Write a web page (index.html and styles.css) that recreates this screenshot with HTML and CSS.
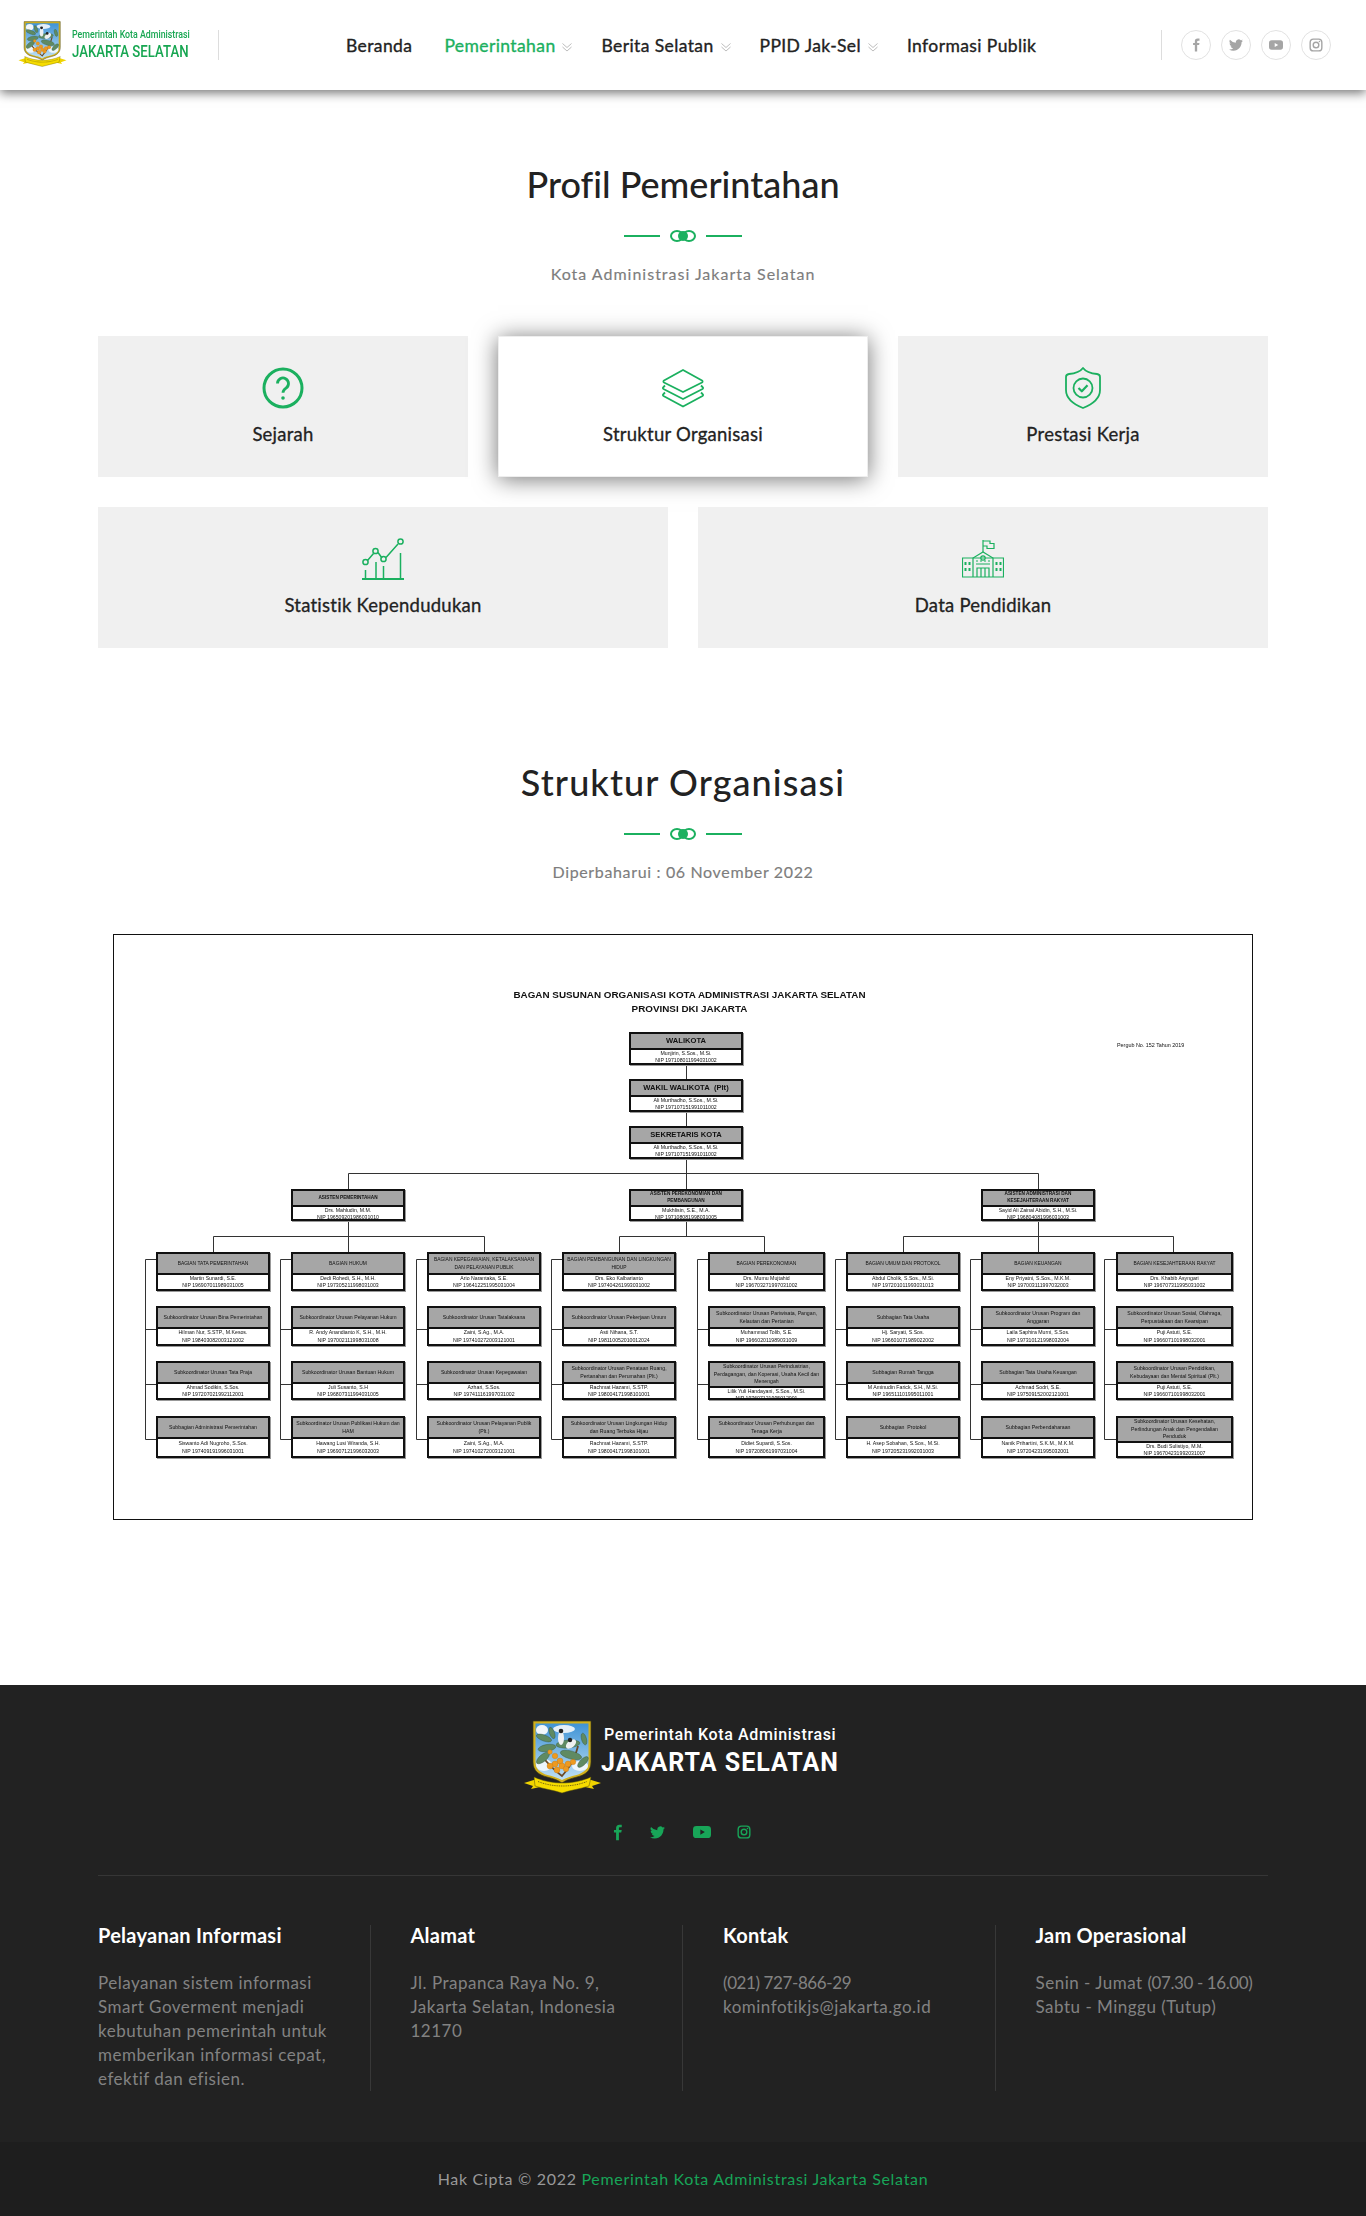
FILE: index.html
```html
<!DOCTYPE html>
<html lang="id">
  <head>
    <meta charset="UTF-8" />
    <meta name="viewport" content="width=device-width, initial-scale=1.0" />
    <title>Profil Pemerintahan - Kota Administrasi Jakarta Selatan</title>
    <link rel="stylesheet" href="styles.css">
  </head>
  <body>
    <!-- Shared icons -->
    <svg class="icon-defs" aria-hidden="true">
      <defs>
        <linearGradient id="sky" x1="0" y1="0" x2="0" y2="1">
          <stop offset="0" stop-color="#3f93d6" />
          <stop offset="1" stop-color="#bfe0f4" />
        </linearGradient>
      </defs>
      <symbol id="crest" viewBox="0 0 77 77">
        <path d="M9 1h58v41c0 9-6 13-14 15-6 1.500-11 3-15 6-4-3-9-4.500-15-6-8-2-14-6-14-15z" fill="#d2b01c" stroke="#3a3a14" stroke-width=".7" />
        <path d="M11.500 3.500h53V42c0 7-5 11-12 13-6 1.500-10 2.500-14.500 5-4.500-2.500-8.500-3.500-14.500-5-7-2-12-6-12-13z" fill="url(#sky)" />
        <ellipse cx="18" cy="10" rx="6" ry="5" fill="#f2f6fa" />
        <ellipse cx="40" cy="9" rx="11" ry="4" fill="#e4eff8" />
        <ellipse cx="20" cy="45" rx="8" ry="6" fill="#eef6fb" />
        <ellipse cx="56" cy="46" rx="8" ry="5" fill="#eef6fb" />
        <path d="M18 36c6 8 12 14 20 20 6-7 12-14 16-30" fill="none" stroke="#6b4a26" stroke-width="1.800" />
        <g fill="#5f8a62" stroke="#34543a" stroke-width=".4">
          <ellipse cx="20" cy="18" rx="8" ry="3" transform="rotate(20 20 18)" />
          <ellipse cx="28" cy="13" rx="6" ry="2.500" transform="rotate(70 28 13)" />
          <ellipse cx="23" cy="28" rx="9" ry="3.500" transform="rotate(-10 23 28)" />
          <ellipse cx="19" cy="38" rx="8" ry="3.500" transform="rotate(-40 19 38)" />
          <ellipse cx="44" cy="24" rx="12" ry="4" transform="rotate(-5 44 24)" />
          <ellipse cx="47" cy="35" rx="11" ry="4" transform="rotate(15 47 35)" />
          <ellipse cx="60" cy="19" rx="6" ry="2.500" transform="rotate(75 60 19)" />
          <ellipse cx="59" cy="42" rx="7" ry="3" transform="rotate(-45 59 42)" />
        </g>
        <ellipse cx="37" cy="18" rx="3" ry="7" fill="#eef0f0" />
        <circle cx="37" cy="11" r="2.300" fill="#222" />
        <ellipse cx="47" cy="24" rx="6" ry="3.500" fill="#eef0f0" transform="rotate(-40 47 24)" />
        <circle cx="46" cy="20" r="2.200" fill="#222" />
        <g fill="#ee9a1f" stroke="#b96d10" stroke-width=".3">
          <circle cx="31" cy="36" r="2.800" />
          <circle cx="36" cy="41" r="3" />
          <circle cx="31" cy="44" r="3" />
          <circle cx="26" cy="46" r="3" />
          <circle cx="38" cy="46" r="3" />
          <circle cx="44" cy="44" r="3" />
          <circle cx="49" cy="42" r="2.800" />
          <circle cx="33" cy="50" r="3" />
          <circle cx="42" cy="49" r="2.800" />
          <circle cx="26" cy="32" r="2.300" />
        </g>
        <path d="M0 63l13-4 3 8-9 2 2-3z" fill="#f0d400" />
        <path d="M77 63l-13-4-3 8 9 2-2-3z" fill="#f0d400" />
        <path d="M10 57c18 8 39 8 57 0l-2 9c-9 3-18 4-27 7-9-3-18-4-27-7z" fill="#f6dc00" stroke="#54500c" stroke-width=".5" />
        <path d="M14 61.500c15 6 34 6 49 0" fill="none" stroke="#6e5e10" stroke-width="1" stroke-dasharray="1 .8" />
      </symbol>
      <symbol id="ic-facebook" viewBox="0 0 24 24">
        <path fill="currentColor" d="M14 8.500V6c0-1 .5-1.500 1.600-1.500H18V1h-3.200C11.500 1 10 3 10 5.600v2.900H7V12h3v11h4V12h3.300l.7-3.500z" />
      </symbol>
      <symbol id="ic-twitter" viewBox="0 0 24 24">
        <path fill="currentColor" d="M23.950 4.570a10 10 0 0 1-2.820.77 4.960 4.960 0 0 0 2.160-2.720 9.900 9.900 0 0 1-3.120 1.180 4.920 4.920 0 0 0-8.380 4.480A13.980 13.980 0 0 1 1.640 3.160a4.920 4.920 0 0 0 1.520 6.570 4.900 4.900 0 0 1-2.230-.61v.06a4.920 4.920 0 0 0 3.950 4.830 4.900 4.900 0 0 1-2.210.08 4.930 4.930 0 0 0 4.600 3.420A9.870 9.870 0 0 1 0 19.540a13.940 13.940 0 0 0 7.550 2.210c9.060 0 14-7.500 14-13.980 0-.21 0-.42-.02-.63a9.940 9.940 0 0 0 2.460-2.570z" />
      </symbol>
      <symbol id="ic-youtube" viewBox="0 0 24 24">
        <path fill="currentColor" fill-rule="evenodd" d="M4.500 4h15A4.500 4.500 0 0 1 24 8.500v7a4.500 4.500 0 0 1-4.500 4.500h-15A4.500 4.500 0 0 1 0 15.500v-7A4.500 4.500 0 0 1 4.500 4zM9.800 8.500v7l6-3.500z" />
      </symbol>
      <symbol id="ic-instagram" viewBox="0 0 24 24">
        <g fill="none" stroke="currentColor" stroke-width="2.400">
          <rect x="2" y="2" width="20" height="20" rx="5.500" />
          <circle cx="12" cy="12" r="4.800" />
        </g>
        <circle cx="18" cy="6" r="1.400" fill="currentColor" />
      </symbol>
      <symbol id="ic-chevrons" viewBox="0 0 10 9">
        <path d="M.5.500l4.500 4 4.500-4M.5 4l4.500 4 4.500-4" fill="none" stroke="currentColor" stroke-width=".9" />
      </symbol>
    </svg>

    <!-- Header -->
    <header class="site-header">
      <a class="header-logo" href="#">
        <svg class="header-crest"><use href="#crest" /></svg>
        <span class="header-logo-text">
          <span class="logo-small">Pemerintah Kota Administrasi</span>
          <span class="logo-big">JAKARTA SELATAN</span>
        </span>
      </a>
      <nav class="main-nav">
        <a href="#" class="nav-first">Beranda</a>
        <a href="#" class="active">Pemerintahan <svg class="nav-chevron"><use href="#ic-chevrons" /></svg></a>
        <a href="#">Berita Selatan <svg class="nav-chevron"><use href="#ic-chevrons" /></svg></a>
        <a href="#">PPID Jak-Sel <svg class="nav-chevron"><use href="#ic-chevrons" /></svg></a>
        <a href="#">Informasi Publik</a>
      </nav>
      <div class="header-social">
        <a href="#"><svg><use href="#ic-facebook" /></svg></a>
        <a href="#"><svg><use href="#ic-twitter" /></svg></a>
        <a href="#"><svg><use href="#ic-youtube" /></svg></a>
        <a href="#"><svg><use href="#ic-instagram" /></svg></a>
      </div>
    </header>

    <main class="container">
      <!-- Profil Pemerintahan -->
      <section class="profil">
        <div class="section-title">
          <h2>Profil Pemerintahan</h2>
          <div class="title-divider"><span class="rings"><i></i><i></i><b></b></span></div>
          <p>Kota Administrasi Jakarta Selatan</p>
        </div>

        <div class="card-row card-row-3">
          <a class="card" href="#">
            <svg class="card-icon" viewBox="0 0 42 42" fill="none" stroke="#1bb05f" stroke-width="3">
              <circle cx="21" cy="21" r="19" />
              <path d="M15.500 16.500a5.500 5.500 0 1 1 8.500 4.600c-2 1.300-3 2.400-3 4.600" stroke-width="2.800" />
              <circle cx="21" cy="31" r="1.800" fill="#1bb05f" stroke="none" />
            </svg>
            <span>Sejarah</span>
          </a>
          <a class="card active" href="#">
            <svg class="card-icon" viewBox="0 0 42 42" fill="none" stroke="#1bb05f" stroke-width="1.800" stroke-linejoin="round">
              <path d="M21 3l19 10.500c.8.500.8 1.500 0 2L21 25 2 15.500c-.8-.5-.8-1.500 0-2z" />
              <path d="M3 18.500L1.500 20c-.8.500-.8 1.500 0 2L21 32l19.500-10c.8-.5.8-1.500 0-2L39 18.500" />
              <path d="M3 25.500L1.500 27c-.8.500-.8 1.500 0 2L21 39.500 40.500 29c.8-.5.8-1.500 0-2L39 25.500" />
            </svg>
            <span>Struktur Organisasi</span>
          </a>
          <a class="card" href="#">
            <svg class="card-icon" viewBox="0 0 42 42" fill="none" stroke="#1bb05f" stroke-width="1.800" stroke-linejoin="round">
              <path d="M21 1c3 4 8 5.500 14 6 2 .2 3 1 3 3v13c0 8-7 14-17 18C11 37 4 31 4 23V10c0-2 1-2.800 3-3 6-.5 11-2 14-6z" />
              <circle cx="21" cy="21" r="9.500" />
              <path d="M16.500 21l3.300 3.300 5.700-6" stroke-width="2.200" />
            </svg>
            <span>Prestasi Kerja</span>
          </a>
        </div>

        <div class="card-row card-row-2">
          <a class="card" href="#">
            <svg class="card-icon" viewBox="0 0 42 42" fill="none" stroke="#1bb05f" stroke-width="1.500">
              <path d="M0 41h42" stroke-width="1.800" />
              <path d="M3.500 32v9M14 24v17M21.500 28v13M38.500 15v26" />
              <path d="M5.500 22.500L11.500 15.500M16 14.500L20 20M24 19.500L36 6" />
              <circle cx="3.500" cy="24" r="2.600" />
              <circle cx="13.500" cy="13" r="2.600" />
              <circle cx="21.500" cy="21" r="2.600" />
              <circle cx="38.500" cy="3.500" r="2.600" />
            </svg>
            <span>Statistik Kependudukan</span>
          </a>
          <a class="card" href="#">
            <svg class="card-icon card-icon-school" viewBox="0 0 42 38" fill="none" stroke="#1bb05f" stroke-width="1.200">
              <path d="M21 12V0M21 1h7v2.500h4v5h-7V6h-4" />
              <path d="M11 37V18l10-6 10 6v19" />
              <path d="M.5 18H11M31 18h10.500v19H.5V18z" />
              <circle cx="21" cy="18" r="2.200" />
              <path d="M15 37V28h12v9M19 28v9M23 28v9M14 24h14" />
              <path d="M14 21h14" stroke-dasharray="2 2" />
              <path d="M3.500 22v3M7.500 22v3M3.500 28v3M7.500 28v3M34.500 22v3M38.500 22v3M34.500 28v3M38.500 28v3" stroke-width="2" />
            </svg>
            <span>Data Pendidikan</span>
          </a>
        </div>
      </section>

      <!-- Struktur Organisasi -->
      <section class="struktur">
        <div class="section-title">
          <h2>Struktur Organisasi</h2>
          <div class="title-divider"><span class="rings"><i></i><i></i><b></b></span></div>
          <p>Diperbaharui : 06 November 2022</p>
        </div>

        <div class="org-frame">
          <div class="org-chart">
            <svg class="org-lines" viewBox="0 0 1138 584" fill="none" stroke="#333" stroke-width="1">
              <path d="M572.500 130v124M234.500 254v-15.500h690V254M234.500 286v31M572.500 286v15M924.500 286v31" />
              <path d="M99.500 317v-15.500h271V317M505.500 317v-15.500h145V317M789.500 317v-15.500h270V317" />
              <path d="M42 324.500H31.500v180H42M31.500 394.500H42M31.500 449.500H42" />
              <path d="M177 324.500H166.500v180H177M166.500 394.500H177M166.500 449.500H177" />
              <path d="M313 324.500H302.500v180H313M302.500 394.500H313M302.500 449.500H313" />
              <path d="M448 324.500H437.500v180H448M437.500 394.500H448M437.500 449.500H448" />
              <path d="M594 324.500H583.500v180H594M583.500 394.500H594M583.500 449.500H594" />
              <path d="M732 324.500H721.500v180H732M721.500 394.500H732M721.500 449.500H732" />
              <path d="M867 324.500H856.500v180H867M856.500 394.500H867M856.500 449.500H867" />
              <path d="M1002 324.500H990.500v180H1002M990.500 394.500H1002M990.500 449.500H1002" />
            </svg>

            <p class="org-note">Pergub No. 152 Tahun 2019</p>
            <h3 class="org-title">BAGAN SUSUNAN ORGANISASI KOTA ADMINISTRASI JAKARTA SELATAN<br />PROVINSI DKI JAKARTA</h3>

            <div class="org-spine">
              <div class="org-box"><div class="org-head">WALIKOTA</div><div class="org-body">Munjirin, S.Sos., M.Si.<br />NIP 197108011994031002</div></div>
              <div class="org-box"><div class="org-head">WAKIL WALIKOTA&nbsp; (Plt)</div><div class="org-body">Ali Murthadho, S.Sos., M.Si.<br />NIP 197107151991011002</div></div>
              <div class="org-box"><div class="org-head">SEKRETARIS KOTA</div><div class="org-body">Ali Murthadho, S.Sos., M.Si.<br />NIP 197107151991011002</div></div>
            </div>

            <div class="org-assistants">
              <div class="org-box"><div class="org-head">ASISTEN PEMERINTAHAN</div><div class="org-body">Drs. Mahludin, M.M.<br />NIP 196509201986031010</div></div>
              <div class="org-box"><div class="org-head"><span>ASISTEN PEREKONOMIAN DAN<br />PEMBANGUNAN</span></div><div class="org-body">Mukhlisin, S.E., M.A.<br />NIP 197108081998031005</div></div>
              <div class="org-box"><div class="org-head"><span>ASISTEN ADMINISTRASI DAN<br />KESEJAHTERAAN RAKYAT</span></div><div class="org-body">Sayid Ali Zainal Abidin, S.H., M.Si.<br />NIP 196804081996031003</div></div>
            </div>

            <div class="org-columns">
              <div class="org-col">
                <div class="org-box"><div class="org-head">BAGIAN TATA PEMERINTAHAN</div><div class="org-body">Martin Sunardi, S.E.<br />NIP 196907011989031005</div></div>
                <div class="org-box"><div class="org-head">Subkoordinator Urusan Bina Pemerintahan</div><div class="org-body">Hilman Nur, S.STP., M.Kesos.<br />NIP 198403082003121002</div></div>
                <div class="org-box"><div class="org-head">Subkoordinator Urusan Tata Praja</div><div class="org-body">Ahmad Sodikin, S.Sos.<br />NIP 197207021992112001</div></div>
                <div class="org-box"><div class="org-head">Subbagian Administrasi Pemerintahan</div><div class="org-body">Siswanto Adi Nugroho, S.Sos.<br />NIP 197409191996031001</div></div>
              </div>
              <div class="org-col">
                <div class="org-box"><div class="org-head">BAGIAN HUKUM</div><div class="org-body">Dedi Rohedi, S.H., M.H.<br />NIP 197305211998031003</div></div>
                <div class="org-box"><div class="org-head">Subkoordinator Urusan Pelayanan Hukum</div><div class="org-body">R. Andy Anandianto K, S.H., M.H.<br />NIP 197002111998031008</div></div>
                <div class="org-box"><div class="org-head">Subkoordinator Urusan Bantuan Hukum</div><div class="org-body">Juli Susanto, S.H<br />NIP 196807311994031005</div></div>
                <div class="org-box"><div class="org-head"><span>Subkoordinator Urusan Publikasi Hukum dan<br />HAM</span></div><div class="org-body">Hawang Lusi Wiranda, S.H.<br />NIP 196907121996032003</div></div>
              </div>
              <div class="org-col">
                <div class="org-box"><div class="org-head"><span>BAGIAN KEPEGAWAIAN, KETALAKSANAAN<br />DAN PELAYANAN PUBLIK</span></div><div class="org-body">Ario Narantaka, S.E.<br />NIP 196412251995031004</div></div>
                <div class="org-box"><div class="org-head">Subkoordinator Urusan Tatalaksana</div><div class="org-body">Zaini, S.Ag., M.A.<br />NIP 197410272003121001</div></div>
                <div class="org-box"><div class="org-head">Subkoordinator Urusan Kepegawaian</div><div class="org-body">Azhari, S.Sos.<br />NIP 197411161997031002</div></div>
                <div class="org-box"><div class="org-head"><span>Subkoordinator Urusan Pelayanan Publik<br />(Plt.)</span></div><div class="org-body">Zaini, S.Ag., M.A.<br />NIP 197410272003121001</div></div>
              </div>
              <div class="org-col">
                <div class="org-box"><div class="org-head"><span>BAGIAN PEMBANGUNAN DAN LINGKUNGAN<br />HIDUP</span></div><div class="org-body">Drs. Eko Kalbarianto<br />NIP 197404261993031002</div></div>
                <div class="org-box"><div class="org-head">Subkoordinator Urusan Pekerjaan Umum</div><div class="org-body">Asti Nihana, S.T.<br />NIP 198110052010012024</div></div>
                <div class="org-box"><div class="org-head"><span>Subkoordinator Urusan Penataan Ruang,<br />Pertanahan dan Perumahan (Plt.)</span></div><div class="org-body">Rachmat Hazami, S.STP.<br />NIP 198004171998101001</div></div>
                <div class="org-box"><div class="org-head"><span>Subkoordinator Urusan Lingkungan Hidup<br />dan Ruang Terbuka Hijau</span></div><div class="org-body">Rachmat Hazami, S.STP.<br />NIP 198004171998101001</div></div>
              </div>
              <div class="org-col org-col-wide">
                <div class="org-box"><div class="org-head">BAGIAN PEREKONOMIAN</div><div class="org-body">Drs. Mumu Mujtahid<br />NIP 196703271997031002</div></div>
                <div class="org-box"><div class="org-head"><span>Subkoordinator Urusan Pariwisata, Pangan,<br />Kelautan dan Pertanian</span></div><div class="org-body">Muhammad Tolib, S.E.<br />NIP 196602011989031009</div></div>
                <div class="org-box"><div class="org-head"><span>Subkoordinator Urusan Perindustrian,<br />Perdagangan, dan Koperasi, Usaha Kecil dan<br />Menengah</span></div><div class="org-body">Lilik Yuli Handayani, S.Sos., M.Si.<br />NIP 197607121995012001</div></div>
                <div class="org-box"><div class="org-head"><span>Subkoordinator Urusan Perhubungan dan<br />Tenaga Kerja</span></div><div class="org-body">Didiet Supardi, S.Sos.<br />NIP 197208061997031004</div></div>
              </div>
              <div class="org-col">
                <div class="org-box"><div class="org-head">BAGIAN UMUM DAN PROTOKOL</div><div class="org-body">Abdul Cholik, S.Sos., M.Si.<br />NIP 197201011993031013</div></div>
                <div class="org-box"><div class="org-head">Subbagian Tata Usaha</div><div class="org-body">Hj. Saryati, S.Sos.<br />NIP 196601071989022002</div></div>
                <div class="org-box"><div class="org-head">Subbagian Rumah Tangga</div><div class="org-body">M Aminudin Farick, S.H., M.Si.<br />NIP 196511101995011001</div></div>
                <div class="org-box"><div class="org-head">Subbagian&nbsp; Protokol</div><div class="org-body">H. Asep Sobahan, S.Sos., M.Si.<br />NIP 197205231992031003</div></div>
              </div>
              <div class="org-col">
                <div class="org-box"><div class="org-head">BAGIAN KEUANGAN</div><div class="org-body">Eny Priyatni, S.Sos., M.K.M.<br />NIP 197003111997032003</div></div>
                <div class="org-box"><div class="org-head"><span>Subkoordinator Urusan Program dan<br />Anggaran</span></div><div class="org-body">Laila Saphira Murni, S.Sos.<br />NIP 197310121998032004</div></div>
                <div class="org-box"><div class="org-head">Subbagian Tata Usaha Keuangan</div><div class="org-body">Achmad Sodri, S.E.<br />NIP 197509152002121001</div></div>
                <div class="org-box"><div class="org-head">Subbagian Perbendaharaan</div><div class="org-body">Nanik Prihartini, S.K.M., M.K.M.<br />NIP 197204231995032001</div></div>
              </div>
              <div class="org-col org-col-wide">
                <div class="org-box"><div class="org-head">BAGIAN KESEJAHTERAAN RAKYAT</div><div class="org-body">Drs. Khabib Asyngari<br />NIP 196707311995031002</div></div>
                <div class="org-box"><div class="org-head"><span>Subkoordinator Urusan Sosial, Olahraga,<br />Perpustakaan dan Kearsipan</span></div><div class="org-body">Puji Astuti, S.E.<br />NIP 196607101998032001</div></div>
                <div class="org-box"><div class="org-head"><span>Subkoordinator Urusan Pendidikan,<br />Kebudayaan dan Mental Spiritual (Plt.)</span></div><div class="org-body">Puji Astuti, S.E.<br />NIP 196607101998032001</div></div>
                <div class="org-box"><div class="org-head"><span>Subkoordinator Urusan Kesehatan,<br />Perlindungan Anak dan Pengendalian<br />Penduduk</span></div><div class="org-body">Drs. Budi Sulistiyo, M.M.<br />NIP 196704231992031007</div></div>
              </div>
            </div>
          </div>
        </div>
      </section>
    </main>

    <!-- Footer -->
    <footer class="site-footer">
      <div class="footer-top">
        <div class="footer-logo">
          <svg class="footer-crest"><use href="#crest" /></svg>
          <div class="footer-logo-text">
            <span class="footer-small">Pemerintah Kota Administrasi</span>
            <span class="footer-big">JAKARTA SELATAN</span>
          </div>
        </div>
        <div class="footer-social">
          <a href="#"><svg class="fs-fb"><use href="#ic-facebook" /></svg></a>
          <a href="#"><svg class="fs-tw"><use href="#ic-twitter" /></svg></a>
          <a href="#"><svg class="fs-yt"><use href="#ic-youtube" /></svg></a>
          <a href="#"><svg class="fs-ig"><use href="#ic-instagram" /></svg></a>
        </div>
      </div>
      <div class="footer-cols">
        <div class="footer-col">
          <h4>Pelayanan Informasi</h4>
          <p>Pelayanan sistem informasi<br />Smart Goverment menjadi<br />kebutuhan pemerintah untuk<br />memberikan informasi cepat,<br />efektif dan efisien.</p>
        </div>
        <div class="footer-col">
          <h4>Alamat</h4>
          <p>Jl. Prapanca Raya No. 9,<br />Jakarta Selatan, Indonesia<br />12170</p>
        </div>
        <div class="footer-col">
          <h4>Kontak</h4>
          <p><span class="nums">(021) 727-866-29</span><br />kominfotikjs@jakarta.go.id</p>
        </div>
        <div class="footer-col">
          <h4>Jam Operasional</h4>
          <p>Senin - Jumat <span class="nums">(07.30 - 16.00)</span><br />Sabtu - Minggu (Tutup)</p>
        </div>
      </div>
      <div class="footer-bottom">
        Hak Cipta © 2022 <a href="#">Pemerintah Kota Administrasi Jakarta Selatan</a>
      </div>
    </footer>
  </body>
</html>
```

FILE: styles.css
```css
* {
  box-sizing: border-box;
}
body {
  margin: 0;
  font-family: Lato, "Noto Sans", sans-serif;
  font-variant-ligatures: none;
  color: #222;
  background: #fff;
}
a {
  color: inherit;
  text-decoration: none;
}
h2,
h3,
h4,
p {
  margin: 0;
}
.icon-defs {
  position: absolute;
  width: 0;
  height: 0;
}

/* header */
.site-header {
  position: relative;
  z-index: 2;
  display: flex;
  align-items: center;
  height: 90px;
  padding: 0 35px 0 17px;
  background: #fff;
  box-shadow: 0 3px 10px rgba(0, 0, 0, 0.55);
}
.header-logo {
  display: flex;
  align-items: center;
  width: 202px;
  height: 30px;
  border-right: 1px solid #ddd;
}
.header-crest {
  flex: none;
  width: 51px;
  height: 48px;
}
.header-logo-text {
  display: flex;
  flex-direction: column;
  margin-left: 4px;
  color: #17a651;
  font-family: Roboto, sans-serif;
  font-weight: 500;
  white-space: nowrap;
  transform: scaleX(0.8);
  transform-origin: left center;
}
.logo-small {
  font-size: 11px;
  line-height: 14px;
}
.logo-big {
  font-size: 16.5px;
  line-height: 20px;
}
.main-nav {
  flex: 1;
  display: flex;
  align-items: center;
  gap: 29px;
  margin-left: 127px;
  font-size: 17.5px;
  letter-spacing: 0.4px;
  -webkit-text-stroke: 0.35px currentColor;
  white-space: nowrap;
}
.main-nav .nav-first {
  margin-right: 3px;
}
.main-nav a.active {
  color: #1bb05f;
}
.nav-chevron {
  width: 10px;
  height: 9px;
  margin-left: 2px;
  color: #b5b5b5;
}
.header-social {
  display: flex;
  gap: 10px;
  height: 30px;
  padding-left: 19px;
  border-left: 1px solid #ddd;
}
.header-social a {
  display: flex;
  align-items: center;
  justify-content: center;
  width: 30px;
  height: 30px;
  border: 1px solid #e2e2e2;
  border-radius: 50%;
  color: #a5a5a5;
}
.header-social svg {
  width: 14px;
  height: 14px;
}

/* section titles */
.container {
  width: 1170px;
  margin: 0 auto;
}
.section-title {
  margin-bottom: 50px;
  text-align: center;
}
.section-title h2 {
  margin-top: -1px;
  font-size: 36px;
  font-weight: 500;
  line-height: 46px;
  color: #222;
}
.section-title p {
  margin-top: 20px;
  font-size: 16px;
  line-height: 24px;
  letter-spacing: 1px;
  -webkit-text-stroke: 0.15px currentColor;
  color: #7d7d7d;
}
.struktur .section-title h2 {
  letter-spacing: 1.1px;
}
.struktur .section-title p {
  letter-spacing: 0.65px;
}
.title-divider {
  display: flex;
  align-items: center;
  justify-content: center;
  gap: 10px;
  height: 12px;
  margin-top: 23px;
}
.title-divider::before,
.title-divider::after {
  content: "";
  width: 36px;
  height: 2px;
  background: #1bb05f;
}
.rings {
  position: relative;
  width: 26px;
  height: 12px;
}
.rings i {
  position: absolute;
  top: 0;
  left: 0;
  width: 14px;
  height: 12px;
  border: 2px solid #1bb05f;
  border-radius: 50%;
}
.rings i + i {
  left: 12px;
}
.rings b {
  position: absolute;
  top: 1px;
  left: 8px;
  width: 10px;
  height: 10px;
  border-radius: 50%;
  background: #1bb05f;
}

/* cards */
.profil {
  padding-top: 72px;
}
.card-row {
  display: grid;
  gap: 30px;
  margin-bottom: 30px;
}
.card-row-3 {
  grid-template-columns: repeat(3, 1fr);
}
.card-row-2 {
  grid-template-columns: repeat(2, 1fr);
}
.card {
  display: flex;
  flex-direction: column;
  align-items: center;
  height: 141px;
  padding-top: 31px;
  background: #f0f0f0;
  font-size: 18.5px;
  line-height: 24px;
  letter-spacing: 0.25px;
  -webkit-text-stroke: 0.3px currentColor;
  color: #222;
}
.card.active {
  background: #fff;
  border: 1px solid #eee;
  padding-top: 30px;
  box-shadow: 0 2px 22px rgba(0, 0, 0, 0.55);
}
.card-icon {
  width: 42px;
  height: 42px;
  margin-bottom: 13px;
}
.card-icon-school {
  height: 38px;
  margin-top: 2px;
  margin-bottom: 15px;
}

/* org chart */
.struktur {
  padding-top: 82px;
  padding-bottom: 165px;
}
.struktur .section-title {
  margin-bottom: 50px;
}
.org-frame {
  height: 586px;
  margin: 0 15px;
  border: 1px solid #111;
}
.org-chart {
  position: relative;
  height: 584px;
  padding-top: 53px;
  font-family: "Liberation Sans", Arial, sans-serif;
  color: #111;
  filter: blur(0.2px);
}
.org-lines {
  position: absolute;
  top: 0;
  left: 0;
  width: 1138px;
  height: 584px;
}
.org-note {
  position: absolute;
  top: 107px;
  left: 1003px;
  font-size: 5.4px;
  line-height: 6px;
  white-space: nowrap;
}
.org-title {
  padding-left: 13px;
  font-size: 9.85px;
  font-weight: 700;
  line-height: 14px;
  text-align: center;
  color: #111;
}
.org-box {
  position: relative;
  display: flex;
  flex-direction: column;
  border: 2px solid #111;
  background: #fff;
  box-shadow: 1px 1px 0 #999;
  font-size: 5.2px;
  text-align: center;
  white-space: nowrap;
}
.org-head {
  flex: 0 0 21px;
  display: flex;
  align-items: center;
  justify-content: center;
  line-height: 7.6px;
  background: #a6a6a6;
  border-bottom: 2px solid #111;
}
.org-body {
  flex: 1;
  display: flex;
  flex-direction: column;
  justify-content: center;
  line-height: 7.4px;
}
.org-spine {
  display: flex;
  flex-direction: column;
  gap: 14px;
  width: 114px;
  margin: 16px 0 0 515px;
}
.org-spine .org-box {
  height: 33px;
}
.org-spine .org-head {
  flex-basis: 16px;
  font-size: 7.6px;
  font-weight: 700;
}
.org-spine .org-body,
.org-assistants .org-body {
  line-height: 6.9px;
}
.org-assistants {
  display: flex;
  gap: 224px;
  margin: 30px 0 0 177px;
}
.org-assistants .org-box {
  width: 114px;
  height: 32px;
}
.org-assistants .org-box:last-child {
  margin-left: 14px;
}
.org-assistants .org-head {
  flex-basis: 16px;
  font-size: 4.7px;
  font-weight: 700;
  line-height: 6.8px;
}
.org-columns {
  display: grid;
  grid-template-columns: 135px 136px 135px 146px 138px 135px 135px 117px;
  margin: 31px 0 0 42px;
}
.org-col {
  display: flex;
  flex-direction: column;
  gap: 15px;
  width: 114px;
}
.org-col-wide {
  width: 117px;
}
.org-col .org-box:first-child .org-head {
  font-size: 4.9px;
}
.org-col .org-box:nth-child(1),
.org-col .org-box:nth-child(3) {
  height: 39px;
}
.org-col .org-box:nth-child(2) {
  height: 40px;
}
.org-col .org-box:nth-child(3) {
  margin-bottom: 1px;
}
.org-col .org-box:nth-child(4) {
  height: 42px;
}

/* footer */
.site-footer {
  height: 532px;
  background: #222;
  color: #828282;
}
.footer-top {
  width: 1170px;
  height: 191px;
  margin: 0 auto;
  padding-top: 35px;
  border-bottom: 1px solid #363636;
}
.footer-logo {
  display: flex;
  justify-content: center;
  height: 77px;
  padding-right: 3px;
}
.footer-crest {
  width: 77px;
  height: 77px;
}
.footer-logo-text {
  display: flex;
  flex-direction: column;
  padding-top: 5px;
  font-family: Roboto, sans-serif;
  color: #fff;
  white-space: nowrap;
}
.footer-small {
  padding-left: 3px;
  font-size: 16px;
  font-weight: 500;
  line-height: 20px;
  letter-spacing: 0.65px;
}
.footer-big {
  margin-top: 2px;
  font-size: 25px;
  font-weight: 700;
  line-height: 32px;
  letter-spacing: 1px;
}
.footer-social {
  display: flex;
  align-items: center;
  height: 18px;
  margin-top: 26px;
  color: #18a558;
}
.footer-social a {
  display: flex;
}
.fs-fb {
  width: 17px;
  height: 17px;
  margin-left: 511px;
}
.fs-tw {
  width: 15px;
  height: 15px;
  margin-left: 24px;
}
.fs-yt {
  width: 18px;
  height: 18px;
  margin-left: 28px;
}
.fs-ig {
  width: 14px;
  height: 14px;
  margin-left: 26px;
}
.footer-cols {
  display: grid;
  grid-template-columns: repeat(4, 312.5px);
  width: 1250px;
  margin: 49px auto 0;
}
.footer-col {
  height: 166px;
  padding: 0 40px;
  border-right: 1px solid #383838;
}
.footer-col:last-child {
  border-right: 0;
}
.footer-col h4 {
  font-size: 20px;
  font-weight: 700;
  line-height: 20px;
  letter-spacing: 0.25px;
  color: #fff;
  margin-bottom: 26px;
}
.footer-col p {
  font-size: 17px;
  line-height: 24px;
  letter-spacing: 0.5px;
  white-space: nowrap;
}
.footer-col .nums {
  letter-spacing: -0.4px;
}
.footer-bottom {
  height: 74px;
  margin-top: 51px;
  background: #1e1e1e;
  font-size: 16px;
  line-height: 74px;
  letter-spacing: 0.7px;
  text-align: center;
  color: #999;
}
.footer-bottom a {
  color: #18a558;
}
```
